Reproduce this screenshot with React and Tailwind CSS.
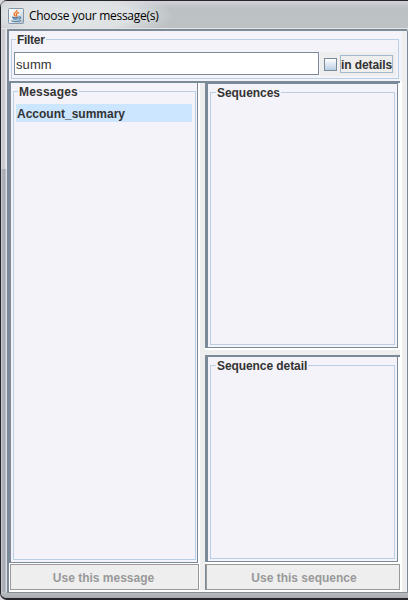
import React from "react";

function TitledBox({ title, className, titleClass, children }) {
  return (
    <div className={"relative border border-[#b8cfe5] " + className}>
      <span className={"absolute top-[-7px] bg-[#f4f3f9] px-px text-[12px] font-bold leading-[15px] whitespace-nowrap " + titleClass}>
        {title}
      </span>
      {children}
    </div>
  );
}

function JavaIcon() {
  return (
    <svg width="16" height="16" viewBox="0 0 16 16" className="shrink-0">
      <defs>
        <linearGradient id="tile" x1="0" y1="0" x2="1" y2="1">
          <stop offset="0" stopColor="#fdfefe" />
          <stop offset=".5" stopColor="#e6edf3" />
          <stop offset="1" stopColor="#a9b9c8" />
        </linearGradient>
      </defs>
      <rect x=".5" y=".5" width="15" height="15" rx=".8" fill="url(#tile)" stroke="#8596a6" />
      <path d="M9 2c.7 1.9-3.3 2.6-2.9 4.4.1.8 1 1.2 1.3 2M11 4.3C9 5 7.9 5.9 8.6 7c.4.7.1 1.2-.4 1.6" fill="none" stroke="#ee7423" strokeWidth="1.4" />
      <path d="M4 8.9c1.7.8 5 .8 6.6.1M5 10.7c1.4.5 3.7.5 5.2 0M3.4 12.8c1.8 1 7 1 9.4-.2M10.8 9c2.5-.7 2.3 1.5-.1 2.1" fill="none" stroke="#47779f" strokeWidth="1.1" />
    </svg>
  );
}

function DisabledButton({ children, className }) {
  return (
    <button disabled className={"block h-[26px] border border-[#999] bg-[#eee] text-center text-[12px] font-bold leading-[26px] text-[#999] " + className}>
      {children}
    </button>
  );
}

export default function App() {
  return (
    <div className="h-[600px] w-[408px] overflow-hidden bg-[#d9d6dc] font-['Liberation_Sans',Arial,sans-serif] text-[#333]">
      <div className="flex h-[600px] w-[420px] flex-col rounded-l-[7px] border-t border-b-2 border-l border-[#25252b] bg-[linear-gradient(#d4d0dc_0px,#bcc1c4_7px,#bdc2c5_28px,#bdc2c5_100%)]">
        <header className="flex h-[27px] items-center bg-[radial-gradient(ellipse_105px_26px_at_68px_14px,#e3e7e8_0%,#dde1e3_60%,transparent_100%)] pl-[7px] pt-[2px]">
          <JavaIcon />
          <h1 className="ml-[5px] font-['Open_Sans','Noto_Sans',sans-serif] text-[12px] leading-[16px] tracking-[-0.28px] text-black whitespace-nowrap">
            Choose your message(s)
          </h1>
        </header>
        <div className="h-px bg-[#e2e5e4]" />
        <div className="flex h-[563px]">
          <div className="flex w-[6px] shrink-0 flex-col">
            <div className="h-[140px] bg-[linear-gradient(90deg,#d8d7dc_0px,#c5c6ca_3px,#e9e9ec_5px)]" />
            <div className="grow bg-[linear-gradient(90deg,#c9cbd1_0px,#a9adb3_2px,#a9adb3_4px,#d9dbde_5px)]" />
          </div>
          <div className="flex w-[400px] shrink-0 border-l-2 border-t-2 border-[#7a8a99] bg-[#eee]">
            <main className="w-[393px] shrink-0 bg-white">
              <section className="h-[50px] bg-[#f4f3f9] pl-[2px] pt-[8px]">
                <TitledBox title="Filter" titleClass="left-[4px] tracking-[-0.3px]" className="h-[40px] w-[388px]">
                  <div className="flex pl-[2px] pt-[12px]">
                    <input
                      readOnly
                      value="summ"
                      className="h-[23px] w-[305px] border border-[#7a8a99] bg-white pl-px pt-px text-[13px] tracking-[0.1px] text-[#333] outline-none"
                    />
                    <label className="ml-px flex h-[24px] w-[76px] bg-[#eee] pl-[4px] pt-[3px]">
                      <span className="mt-[3px] h-[13px] w-[13px] border border-[#7a8a99] bg-gradient-to-b from-white to-[#b8cfe5]" />
                      <span className="ml-[3px] h-[18px] w-[53px] border border-[#a3b8cc] text-[12px] font-bold leading-[18px] tracking-[-0.1px] whitespace-nowrap">
                        in details
                      </span>
                    </label>
                  </div>
                </TitledBox>
              </section>
              <div className="h-[2px] w-[391px] bg-[#7a8a99]" />
              <div className="flex h-[507px]">
                <section className="w-[191px] shrink-0 bg-white">
                  <div className="h-[480px] w-[189px] border-b border-l-2 border-r border-[#7a8a99] bg-[#f4f3f9] pl-[2px] pt-[8px]">
                    <TitledBox title="Messages" titleClass="left-[4px] tracking-[0.2px]" className="h-[469px] w-[183px]">
                      <ul className="pl-[2px] pt-[12px]">
                        <li className="h-[18px] w-[176px] bg-[#cce6ff] pl-px text-[12px] font-bold leading-[20px]">
                          Account_summary
                        </li>
                      </ul>
                    </TitledBox>
                  </div>
                  <DisabledButton className="mt-px ml-px w-[189px] pr-[2px]">Use this message</DisabledButton>
                </section>
                <div className="w-[5px] shrink-0 bg-[#eee]" />
                <section className="w-[197px] shrink-0 bg-white">
                  <div className="h-[265px] w-[193px] border-b border-l-3 border-r border-t border-[#7a8a99] bg-[#f4f3f9] pl-[2px] pt-[8px]">
                    <TitledBox title="Sequences" titleClass="left-[5px] tracking-[-0.05px]" className="h-[253px] w-[185px]" />
                  </div>
                  <div className="mt-[2px] h-[5px] w-[195px] bg-[#eee]" />
                  <div className="h-[2px] w-[195px] bg-[#7a8a99]" />
                  <div className="h-[205px] w-[193px] border-b border-l-3 border-r border-[#7a8a99] bg-[#f4f3f9] pl-[2px] pt-[8px]">
                    <TitledBox title="Sequence detail" titleClass="left-[5px] tracking-[-0.08px]" className="h-[194px] w-[185px]" />
                  </div>
                  <div className="mt-[2px] border-l border-[#7a8a99]">
                    <DisabledButton className="w-[194px] pl-[2px]">Use this sequence</DisabledButton>
                  </div>
                </section>
              </div>
            </main>
            <div className="h-[561px] w-[6px] shrink-0 border-r border-[#7a8a99] bg-[#eee]" />
          </div>
        </div>
        <div className="ml-[6px] h-px bg-[#888d93]" />
        <div className="h-[5px] rounded-bl-[5px] bg-[linear-gradient(#b7bbc0,#a9adb3)]" />
      </div>
    </div>
  );
}
